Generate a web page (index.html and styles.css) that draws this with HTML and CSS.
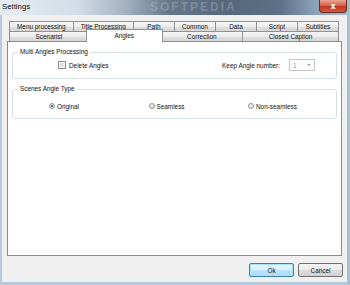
FILE: index.html
```html
<!DOCTYPE html>
<html lang="en">
<head>
    <meta charset="UTF-8">
    <meta name="viewport" content="width=device-width, initial-scale=1.0">
    <title>Settings</title>
    <link rel="stylesheet" href="styles.css">
</head>
<body>
    <div class="window">
        <div class="titlebar">
            <span class="title">Settings</span>
            <span class="watermark">SOFTPEDIA</span>
            <button class="close-btn">x</button>
        </div>

        <div class="frame">
            <div class="tabs">
                <div class="tab-row back">
                    <div class="tab">Menu processing</div>
                    <div class="tab">Title Processing</div>
                    <div class="tab">Path</div>
                    <div class="tab">Common</div>
                    <div class="tab">Data</div>
                    <div class="tab">Script</div>
                    <div class="tab">Subtitles</div>
                </div>
                <div class="tab-row">
                    <div class="tab">Scenarist</div>
                    <div class="tab active">Angles</div>
                    <div class="tab">Correction</div>
                    <div class="tab">Closed Caption</div>
                </div>
            </div>

            <div class="panel">
                <fieldset class="group">
                    <legend>Multi Angles Processing</legend>
                    <div class="group-row">
                        <label class="check">
                            <span class="check-box"></span>
                            Delete Angles
                        </label>
                        <div class="keep">
                            <span>Keep Angle number:</span>
                            <div class="combo">
                                <span>1</span>
                                <span class="combo-arrow"></span>
                            </div>
                        </div>
                    </div>
                </fieldset>

                <fieldset class="group">
                    <legend>Scenes Angle Type</legend>
                    <div class="radio-row">
                        <label class="radio"><span class="radio-dot checked"></span>Original</label>
                        <label class="radio"><span class="radio-dot"></span>Seamless</label>
                        <label class="radio"><span class="radio-dot"></span>Non-seamless</label>
                    </div>
                </fieldset>
            </div>

            <div class="button-container">
                <button class="btn default">Ok</button>
                <button class="btn">Cancel</button>
            </div>
        </div>
    </div>
</body>
</html>
```

FILE: styles.css
```css
* {
    box-sizing: border-box;
    margin: 0;
    padding: 0;
}

body {
    font-family: 'Liberation Sans', Arial, sans-serif;
    font-size: 6.4px;
    color: #111;
    width: 350px;
    height: 285px;
    overflow: hidden;
}

.window {
    width: 350px;
    height: 285px;
    display: flex;
    flex-direction: column;
    background: #f0f0f0;
}

.titlebar {
    position: relative;
    height: 15px;
    flex: none;
    overflow: hidden;
    background: linear-gradient(90deg, #e6ecf2 0%, #d3dde8 22%, #a3b1c0 36%, #66778a 48%, #56687b 65%, #5d7087 80%, #8ba2b9 90%, #a9bed2 100%);
}

.title {
    position: absolute;
    left: 2px;
    top: 2px;
    font-size: 7.8px;
    color: #111;
}

.watermark {
    position: absolute;
    left: 150px;
    top: 1px;
    font-size: 12px;
    line-height: 13px;
    font-weight: bold;
    letter-spacing: 2px;
    color: rgba(200, 212, 224, 0.3);
}

.close-btn {
    position: absolute;
    right: 3px;
    top: 0;
    width: 28px;
    height: 13px;
    border: 1px solid #6b2a22;
    border-top: none;
    border-radius: 0 0 4px 4px;
    background: linear-gradient(#e9a393 0%, #d6624d 45%, #c2381f 55%, #d35b3e 100%);
    color: #fff;
    font-family: 'DejaVu Sans', sans-serif;
    font-size: 8px;
    font-weight: bold;
    line-height: 11px;
}

.frame {
    flex: 1;
    display: flex;
    flex-direction: column;
    padding: 6px 5px 0 5px;
    border-left: 2px solid #b7cbdf;
    border-right: 3px solid #a9bfd4;
    border-bottom: 3px solid #b5c9dc;
}

.tabs {
    margin: 0 4px 0 2px;
}

.tab-row {
    display: flex;
    height: 10px;
}

.tab {
    flex: 1 1 auto;
    padding: 0 6px;
    height: 10px;
    line-height: 9px;
    text-align: center;
    white-space: nowrap;
    border: 1px solid #8e9095;
    border-bottom: none;
    margin-right: -1px;
    background: linear-gradient(#f6f6f6 0%, #ececec 50%, #e0e0e0 51%, #d6d6d6 100%);
}

.tab-row.back .tab {
    flex: 1 1 37px;
    padding: 0 7px;
}

.tab.active {
    position: relative;
    z-index: 1;
    height: 13px;
    margin: -2px -2px 0 -2px;
    padding: 1px 8px 0;
    background: #fff;
}

.panel {
    height: 215px;
    flex: none;
    background: #fff;
    border: 1px solid #898c95;
    padding: 6px 4px;
}

.group {
    border: 1px solid #d5dfe5;
    border-radius: 3px;
    padding: 3px 0 7px;
    min-width: 0;
}

.group + .group {
    margin-top: 6px;
}

.group legend {
    margin-left: 5px;
    padding: 0 2px;
    line-height: 8px;
}

.group-row {
    display: flex;
    justify-content: space-between;
    align-items: center;
    height: 12px;
    padding: 0 21px 0 45px;
}

.check {
    display: flex;
    align-items: center;
    gap: 3px;
}

.check-box {
    width: 8px;
    height: 8px;
    border: 1px solid #8e8f8f;
    background: linear-gradient(135deg, #d4d4d4, #f4f4f4);
    box-shadow: inset 0 0 0 1px #f4f4f4;
}

.keep {
    display: flex;
    align-items: center;
    gap: 9px;
}

.combo {
    width: 26px;
    height: 12px;
    border: 1px solid #c7c7c7;
    background: #fcfcfc;
    display: flex;
    align-items: center;
    justify-content: space-between;
    padding: 0 3px 0 3px;
    color: #9a9a9a;
}

.combo-arrow {
    width: 0;
    height: 0;
    border-left: 2px solid transparent;
    border-right: 2px solid transparent;
    border-top: 2px solid #a5a5a5;
}

.radio-row {
    display: grid;
    grid-template-columns: repeat(3, 99.5px);
    align-items: center;
    height: 10px;
    margin-top: 5px;
    padding-left: 36px;
}

.radio {
    display: flex;
    align-items: center;
    gap: 2px;
}

.radio-dot {
    width: 6px;
    height: 6px;
    border-radius: 50%;
    border: 1px solid #939393;
    background: radial-gradient(circle at 40% 40%, #f4f4f4, #cfcfcf);
}

.radio-dot.checked {
    background: radial-gradient(circle, #1f5fa8 0%, #3d86cf 45%, #e9e9e9 55%, #d0d0d0 100%);
}

.button-container {
    display: flex;
    justify-content: flex-end;
    gap: 4px;
    margin-top: 7px;
    margin-right: -1px;
}

.btn {
    width: 45px;
    height: 14px;
    font-family: inherit;
    font-size: 6.4px;
    color: #111;
    border: 1px solid #707070;
    border-radius: 2px;
    background: linear-gradient(#f3f3f3 0%, #ebebeb 50%, #dddddd 51%, #d0d0d0 100%);
}

.btn.default {
    border-color: #3c7fb1;
    background: linear-gradient(#eaf6fd 0%, #d9f0fc 50%, #bee6fd 51%, #a7d9f5 100%);
    box-shadow: inset 0 0 0 1px #a9e2fb;
}
```
